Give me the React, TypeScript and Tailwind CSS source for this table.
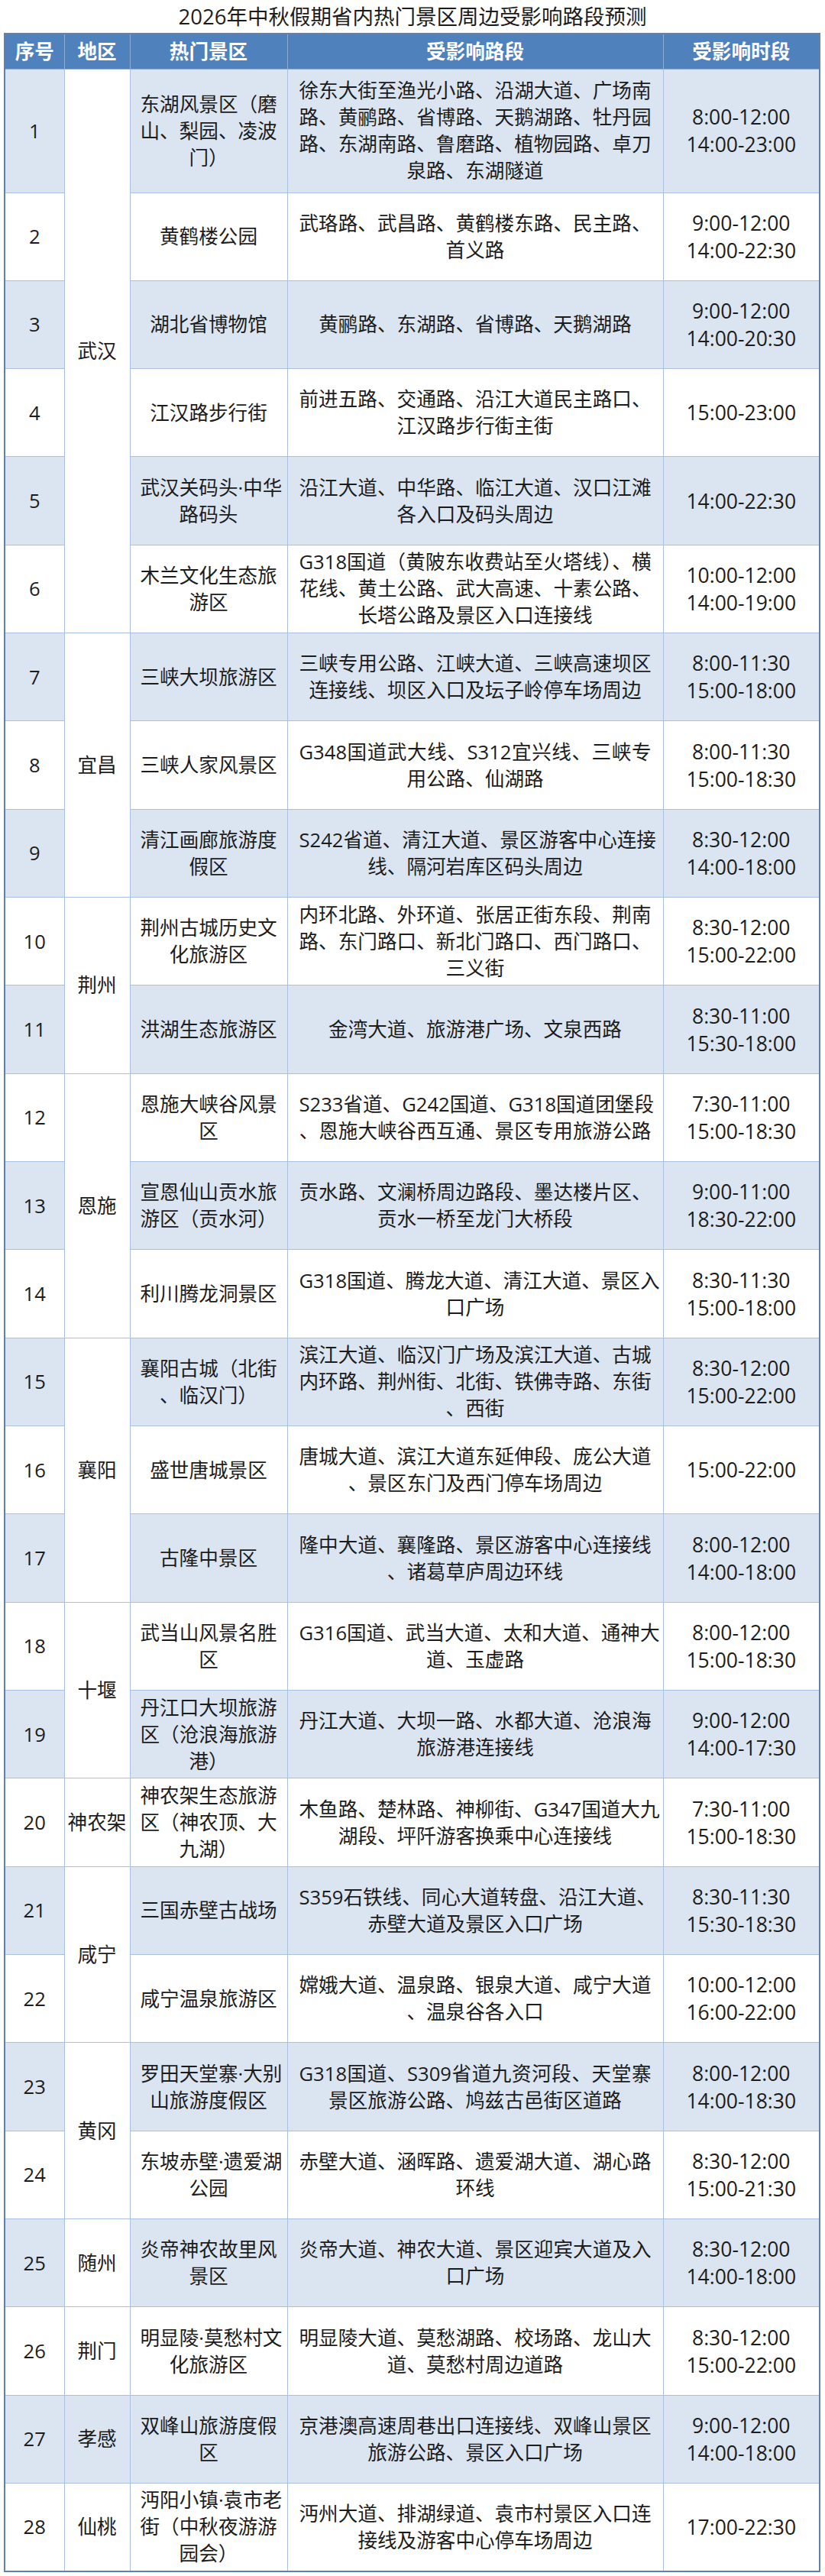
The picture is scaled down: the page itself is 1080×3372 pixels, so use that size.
import React from 'react';

type Row = {
  no: number;
  region?: string;
  span?: number;
  tint?: boolean;
  spot: string[];
  roads: string[];
  times: string[];
};

const rows: Row[] = [
  {
    no: 1,
    region: '武汉',
    span: 6,
    spot: ['东湖风景区（磨', '山、梨园、凌波', '门）'],
    roads: [
      '徐东大街至渔光小路、沿湖大道、广场南',
      '路、黄鹂路、省博路、天鹅湖路、牡丹园',
      '路、东湖南路、鲁磨路、植物园路、卓刀',
      '泉路、东湖隧道',
    ],
    times: ['8:00-12:00', '14:00-23:00'],
  },
  {
    no: 2,
    spot: ['黄鹤楼公园'],
    roads: ['武珞路、武昌路、黄鹤楼东路、民主路、', '首义路'],
    times: ['9:00-12:00', '14:00-22:30'],
  },
  {
    no: 3,
    spot: ['湖北省博物馆'],
    roads: ['黄鹂路、东湖路、省博路、天鹅湖路'],
    times: ['9:00-12:00', '14:00-20:30'],
  },
  {
    no: 4,
    spot: ['江汉路步行街'],
    roads: ['前进五路、交通路、沿江大道民主路口、', '江汉路步行街主街'],
    times: ['15:00-23:00'],
  },
  {
    no: 5,
    spot: ['武汉关码头·中华', '路码头'],
    roads: ['沿江大道、中华路、临江大道、汉口江滩', '各入口及码头周边'],
    times: ['14:00-22:30'],
  },
  {
    no: 6,
    spot: ['木兰文化生态旅', '游区'],
    roads: [
      'G318国道（黄陂东收费站至火塔线）、横',
      '花线、黄土公路、武大高速、十素公路、',
      '长塔公路及景区入口连接线',
    ],
    times: ['10:00-12:00', '14:00-19:00'],
  },
  {
    no: 7,
    region: '宜昌',
    span: 3,
    spot: ['三峡大坝旅游区'],
    roads: ['三峡专用公路、江峡大道、三峡高速坝区', '连接线、坝区入口及坛子岭停车场周边'],
    times: ['8:00-11:30', '15:00-18:00'],
  },
  {
    no: 8,
    spot: ['三峡人家风景区'],
    roads: ['G348国道武大线、S312宜兴线、三峡专', '用公路、仙湖路'],
    times: ['8:00-11:30', '15:00-18:30'],
  },
  {
    no: 9,
    spot: ['清江画廊旅游度', '假区'],
    roads: ['S242省道、清江大道、景区游客中心连接', '线、隔河岩库区码头周边'],
    times: ['8:30-12:00', '14:00-18:00'],
  },
  {
    no: 10,
    region: '荆州',
    span: 2,
    spot: ['荆州古城历史文', '化旅游区'],
    roads: [
      '内环北路、外环道、张居正街东段、荆南',
      '路、东门路口、新北门路口、西门路口、',
      '三义街',
    ],
    times: ['8:30-12:00', '15:00-22:00'],
  },
  {
    no: 11,
    spot: ['洪湖生态旅游区'],
    roads: ['金湾大道、旅游港广场、文泉西路'],
    times: ['8:30-11:00', '15:30-18:00'],
  },
  {
    no: 12,
    region: '恩施',
    span: 3,
    spot: ['恩施大峡谷风景', '区'],
    roads: ['S233省道、G242国道、G318国道团堡段', '、恩施大峡谷西互通、景区专用旅游公路'],
    times: ['7:30-11:00', '15:00-18:30'],
  },
  {
    no: 13,
    spot: ['宣恩仙山贡水旅', '游区（贡水河）'],
    roads: ['贡水路、文澜桥周边路段、墨达楼片区、', '贡水一桥至龙门大桥段'],
    times: ['9:00-11:00', '18:30-22:00'],
  },
  {
    no: 14,
    spot: ['利川腾龙洞景区'],
    roads: ['G318国道、腾龙大道、清江大道、景区入', '口广场'],
    times: ['8:30-11:30', '15:00-18:00'],
  },
  {
    no: 15,
    region: '襄阳',
    span: 3,
    spot: ['襄阳古城（北街', '、临汉门）'],
    roads: [
      '滨江大道、临汉门广场及滨江大道、古城',
      '内环路、荆州街、北街、铁佛寺路、东街',
      '、西街',
    ],
    times: ['8:30-12:00', '15:00-22:00'],
  },
  {
    no: 16,
    spot: ['盛世唐城景区'],
    roads: ['唐城大道、滨江大道东延伸段、庞公大道', '、景区东门及西门停车场周边'],
    times: ['15:00-22:00'],
  },
  {
    no: 17,
    spot: ['古隆中景区'],
    roads: ['隆中大道、襄隆路、景区游客中心连接线', '、诸葛草庐周边环线'],
    times: ['8:00-12:00', '14:00-18:00'],
  },
  {
    no: 18,
    region: '十堰',
    span: 2,
    spot: ['武当山风景名胜', '区'],
    roads: ['G316国道、武当大道、太和大道、通神大', '道、玉虚路'],
    times: ['8:00-12:00', '15:00-18:30'],
  },
  {
    no: 19,
    spot: ['丹江口大坝旅游', '区（沧浪海旅游', '港）'],
    roads: ['丹江大道、大坝一路、水都大道、沧浪海', '旅游港连接线'],
    times: ['9:00-12:00', '14:00-17:30'],
  },
  {
    no: 20,
    region: '神农架',
    span: 1,
    spot: ['神农架生态旅游', '区（神农顶、大', '九湖）'],
    roads: ['木鱼路、楚林路、神柳街、G347国道大九', '湖段、坪阡游客换乘中心连接线'],
    times: ['7:30-11:00', '15:00-18:30'],
  },
  {
    no: 21,
    region: '咸宁',
    span: 2,
    spot: ['三国赤壁古战场'],
    roads: ['S359石铁线、同心大道转盘、沿江大道、', '赤壁大道及景区入口广场'],
    times: ['8:30-11:30', '15:30-18:30'],
  },
  {
    no: 22,
    spot: ['咸宁温泉旅游区'],
    roads: ['嫦娥大道、温泉路、银泉大道、咸宁大道', '、温泉谷各入口'],
    times: ['10:00-12:00', '16:00-22:00'],
  },
  {
    no: 23,
    region: '黄冈',
    span: 2,
    spot: ['罗田天堂寨·大别', '山旅游度假区'],
    roads: ['G318国道、S309省道九资河段、天堂寨', '景区旅游公路、鸠兹古邑街区道路'],
    times: ['8:00-12:00', '14:00-18:30'],
  },
  {
    no: 24,
    spot: ['东坡赤壁·遗爱湖', '公园'],
    roads: ['赤壁大道、涵晖路、遗爱湖大道、湖心路', '环线'],
    times: ['8:30-12:00', '15:00-21:30'],
  },
  {
    no: 25,
    region: '随州',
    span: 1,
    spot: ['炎帝神农故里风', '景区'],
    roads: ['炎帝大道、神农大道、景区迎宾大道及入', '口广场'],
    times: ['8:30-12:00', '14:00-18:00'],
  },
  {
    no: 26,
    region: '荆门',
    span: 1,
    spot: ['明显陵·莫愁村文', '化旅游区'],
    roads: ['明显陵大道、莫愁湖路、校场路、龙山大', '道、莫愁村周边道路'],
    times: ['8:30-12:00', '15:00-22:00'],
  },
  {
    no: 27,
    region: '孝感',
    span: 1,
    tint: true,
    spot: ['双峰山旅游度假', '区'],
    roads: ['京港澳高速周巷出口连接线、双峰山景区', '旅游公路、景区入口广场'],
    times: ['9:00-12:00', '14:00-18:00'],
  },
  {
    no: 28,
    region: '仙桃',
    span: 1,
    spot: ['沔阳小镇·袁市老', '街（中秋夜游游', '园会）'],
    roads: ['沔州大道、排湖绿道、袁市村景区入口连', '接线及游客中心停车场周边'],
    times: ['17:00-22:30'],
  },
];

// lines are broken as in the sheet: full lines spread edge to edge, the last one centred
function Lines({ lines }: { lines: string[] }) {
  return (
    <div>
      {lines.map((line, i) => (
        <div
          key={i}
          className={
            i < lines.length - 1
              ? 'whitespace-nowrap text-justify [text-align-last:justify]'
              : 'whitespace-nowrap text-center'
          }
        >
          {line}
        </div>
      ))}
    </div>
  );
}

const cell = 'border border-[#a9c0de] align-middle';

export default function App() {
  return (
    <div className="w-[1080px] min-h-[3372px] bg-white text-[#1c1c1c] font-['Open_Sans','Noto_Sans_CJK_SC',sans-serif]">
      <div className="h-[43px] flex items-center justify-center text-[27.5px] leading-none">
        2026年中秋假期省内热门景区周边受影响路段预测
      </div>

      <table className="ml-[5px] w-[1067px] table-fixed border-collapse border-2 border-[#5f80b2] text-[25.6px] leading-[35px]">
        <colgroup>
          <col className="w-[78px]" />
          <col className="w-[86px]" />
          <col className="w-[206px]" />
          <col className="w-[492px]" />
          <col className="w-[205px]" />
        </colgroup>
        <thead>
          <tr className="h-[46px] bg-[#4f81bd] text-white font-bold">
            <th className="border border-[#8eaad6] font-bold">序号</th>
            <th className="border border-[#8eaad6] font-bold">地区</th>
            <th className="border border-[#8eaad6] font-bold">热门景区</th>
            <th className="border border-[#8eaad6] font-bold">受影响路段</th>
            <th className="border border-[#8eaad6] font-bold">受影响时段</th>
          </tr>
        </thead>
        <tbody>
          {rows.map((r) => {
            const odd = r.no % 2 === 1;
            return (
              <tr
                key={r.no}
                className={`${r.no === 1 ? 'h-[162px]' : 'h-[115.33px]'} ${odd ? 'bg-[#dbe5f1]' : 'bg-white'}`}
              >
                <td className={`${cell} text-center`}>{r.no}</td>
                {r.region && (
                  <td
                    rowSpan={r.span}
                    className={`${cell} text-center ${r.tint ? 'bg-[#dbe5f1]' : 'bg-white'}`}
                  >
                    {r.region}
                  </td>
                )}
                <td className={`${cell} px-[13px]`}>
                  <Lines lines={r.spot} />
                </td>
                <td className={`${cell} px-[15px]`}>
                  <Lines lines={r.roads} />
                </td>
                <td className={`${cell} text-center text-[26.5px] leading-[36px]`}>
                  {r.times.map((t) => (
                    <div key={t}>{t}</div>
                  ))}
                </td>
              </tr>
            );
          })}
        </tbody>
      </table>
    </div>
  );
}
